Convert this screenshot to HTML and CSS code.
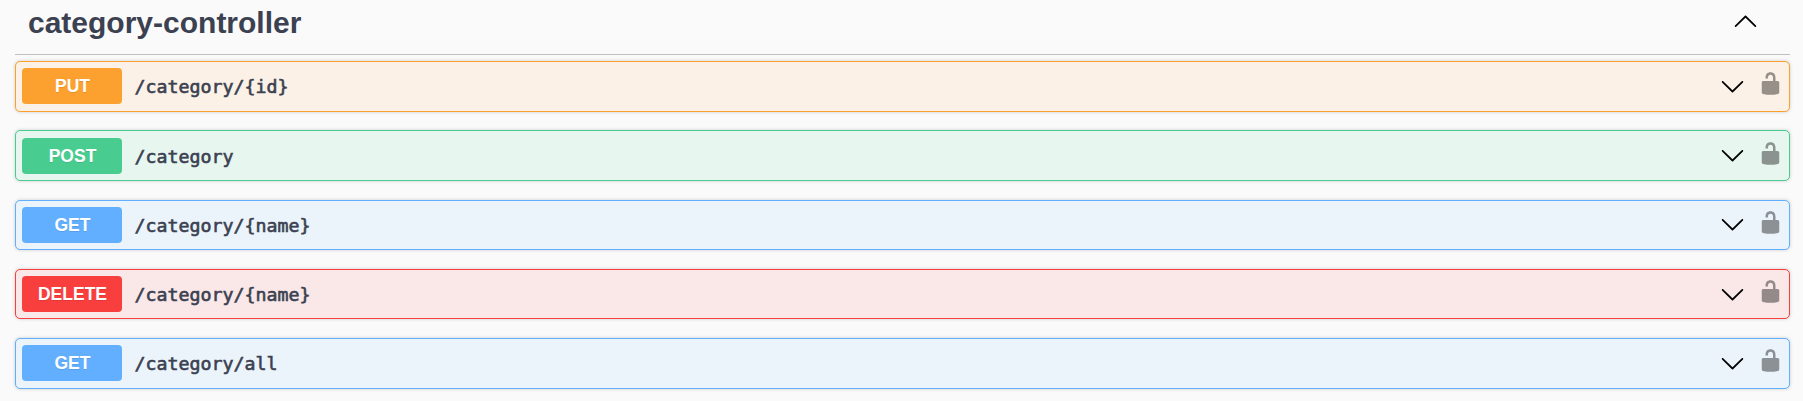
FILE: index.html
```html
<!DOCTYPE html>
<html lang="en">
<head>
<meta charset="utf-8">
<title>category-controller</title>
<link rel="stylesheet" href="styles.css">
</head>
<body>
<svg class="defs" aria-hidden="true">
  <symbol id="up" viewBox="0 0 20 20"><path d="M17.418 14.908c.272.268.709.268.979 0s.271-.701 0-.969l-7.908-7.83c-.27-.268-.707-.268-.979 0l-7.908 7.83c-.27.268-.27.701 0 .969.271.268.709.268.979 0L10 7.767l7.418 7.141z"/></symbol>
  <symbol id="down" viewBox="0 0 20 20"><path d="M17.418 5.092c.272-.268.709-.268.979 0s.271.701 0 .969l-7.908 7.83c-.27.268-.707.268-.979 0l-7.908-7.83c-.27-.268-.27-.701 0-.969.271-.268.709-.268.979 0L10 12.233l7.418-7.141z"/></symbol>
  <symbol id="unlocked" viewBox="0 0 20 20"><path d="M15.8 8H14V5.6C14 2.703 12.665 1 10 1 7.334 1 6 2.703 6 5.6V6h2v-.801C8 3.754 8.797 3 10 3c1.203 0 2 .754 2 2.199V8H4c-.553 0-1 .646-1 1.199V17c0 .549.428 1.139.951 1.307l1.197.387C5.672 18.861 6.55 19 7.1 19h5.8c.549 0 1.428-.139 1.951-.307l1.196-.387c.524-.167.953-.757.953-1.306V9.199C17 8.646 16.352 8 15.8 8z"/></symbol>
</svg>
<main class="section">
  <header class="tag"><h1 class="tag-name">category-controller</h1><svg class="icon"><use href="#up"/></svg></header>
  <div class="operations">
    <div class="op put"><span class="method">PUT</span><span class="path">/category/{id}</span><svg class="icon arrow"><use href="#down"/></svg><svg class="icon lock"><use href="#unlocked"/></svg></div>
    <div class="op post"><span class="method">POST</span><span class="path">/category</span><svg class="icon arrow"><use href="#down"/></svg><svg class="icon lock"><use href="#unlocked"/></svg></div>
    <div class="op get"><span class="method">GET</span><span class="path">/category/{name}</span><svg class="icon arrow"><use href="#down"/></svg><svg class="icon lock"><use href="#unlocked"/></svg></div>
    <div class="op delete"><span class="method">DELETE</span><span class="path">/category/{name}</span><svg class="icon arrow"><use href="#down"/></svg><svg class="icon lock"><use href="#unlocked"/></svg></div>
    <div class="op get"><span class="method">GET</span><span class="path">/category/all</span><svg class="icon arrow"><use href="#down"/></svg><svg class="icon lock"><use href="#unlocked"/></svg></div>
  </div>
</main>
</body>
</html>
```
FILE: styles.css
```css
* { box-sizing: border-box; }
body {
  margin: 0;
  height: 401px;
  overflow: hidden;
  background: #fafafa;
  color: #3b4151;
  font-family: "Liberation Sans", Arial, sans-serif;
}
.defs { display: none; }
.section { padding: 0 13px 0 15px; }
.tag {
  display: flex;
  align-items: center;
  justify-content: space-between;
  height: 55px;
  padding: 0 32px 14px 13px;
  border-bottom: 1px solid #bfc0c4;
}
.tag-name {
  margin: 6px 0 0;
  font-size: 30px;
  line-height: 36px;
  font-weight: 700;
}
.icon { flex: none; width: 25px; height: 25px; fill: #000; }
.tag .icon { margin-top: 1px; }
.operations {
  display: flex;
  flex-direction: column;
  gap: 18.75px;
  padding-top: 6px;
}
.op {
  display: flex;
  align-items: center;
  height: 50.5px;
  padding: 0 6px;
  border: 1px solid;
  border-radius: 5px;
  box-shadow: 0 0 3.75px rgba(0, 0, 0, .19);
}
.method {
  width: 100px;
  height: 36px;
  padding-left: 1px;
  border-radius: 4px;
  color: #fff;
  font-size: 17.5px;
  font-weight: 700;
  line-height: 36px;
  text-align: center;
  text-shadow: 0 1px 0 rgba(0, 0, 0, .1);
}
.path {
  flex: 1;
  padding: 1px 0 0 12.5px;
  font: 400 18.3px/25px "DejaVu Sans Mono", monospace;
  -webkit-text-stroke: .6px #3b4151;
}
.arrow { margin: 2px 13px 0 0; }
.lock { margin: -5px 0 0; opacity: .4; }
.put { border-color: #fca130; background: #fbf1e6; }
.put .method { background: #fca130; }
.post { border-color: #49cc90; background: #e8f6f0; }
.post .method { background: #49cc90; }
.get { border-color: #61affe; background: #ebf3fb; }
.get .method { background: #61affe; }
.delete { border-color: #f93e3e; background: #fae7e7; }
.delete .method { background: #f93e3e; }
```
